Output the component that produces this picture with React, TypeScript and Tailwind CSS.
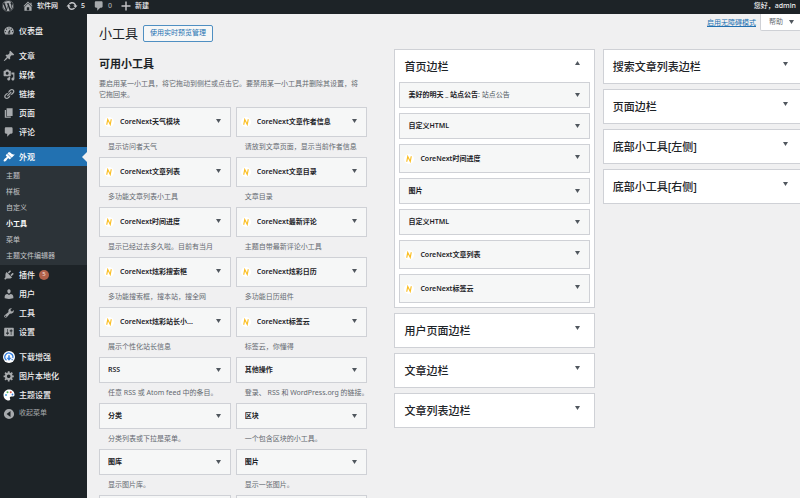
import type { ReactNode } from "react";
import { FaWordpress } from "react-icons/fa";

const icons = {
  dashboard:
    "M3.76 16h12.48c1.1-1.37 1.76-3.11 1.76-5 0-4.42-3.58-8-8-8s-8 3.58-8 8c0 1.89.66 3.63 1.76 5zM10 4c.55 0 1 .45 1 1s-.45 1-1 1-1-.45-1-1 .45-1 1-1zM6 6c.55 0 1 .45 1 1s-.45 1-1 1-1-.45-1-1 .45-1 1-1zm8 0c.55 0 1 .45 1 1s-.45 1-1 1-1-.45-1-1 .45-1 1-1zm-5.37 5.55L12 7v6c0 1.1-.9 2-2 2s-2-.9-2-2c0-.57.24-1.08.63-1.45zM4 10c.55 0 1 .45 1 1s-.45 1-1 1-1-.45-1-1 .45-1 1-1zm12 0c.55 0 1 .45 1 1s-.45 1-1 1-1-.45-1-1 .45-1 1-1zm-5 3c0-.55-.45-1-1-1s-1 .45-1 1 .45 1 1 1 1-.45 1-1z",
  post: "M10.44 3.02l1.82-1.82 6.36 6.35-1.83 1.82c-1.05-.68-2.48-.57-3.41.36l-.75.75c-.92.93-1.04 2.35-.35 3.41l-1.83 1.82-2.41-2.41-2.8 2.79c-.42.42-3.38 2.71-3.8 2.29s1.86-3.39 2.28-3.81l2.79-2.79L4.1 9.36l1.83-1.82c1.05.69 2.48.57 3.4-.36l.75-.75c.93-.92 1.05-2.35.36-3.41z",
  media:
    "M13 11V4c0-.55-.45-1-1-1h-1.67L9 1H5L3.67 3H2c-.55 0-1 .45-1 1v7c0 .55.45 1 1 1h10c.55 0 1-.45 1-1zM7 4.5c1.38 0 2.5 1.12 2.5 2.5S8.38 9.5 7 9.5 4.5 8.38 4.5 7 5.62 4.5 7 4.5zM14 6h5v10.5c0 1.38-1.12 2.5-2.5 2.5S14 17.88 14 16.5s1.12-2.5 2.5-2.5c.17 0 .34.02.5.05V9h-3V6zm-4 8.05V13h2v3.5c0 1.38-1.12 2.5-2.5 2.5S7 17.88 7 16.5 8.12 14 9.5 14c.17 0 .34.02.5.05z",
  links:
    "M17.74 2.76c1.68 1.69 1.68 4.41 0 6.1l-1.53 1.52c-1.12 1.12-2.7 1.47-4.14 1.09l2.62-2.61.76-.77.76-.76c.84-.84.84-2.2 0-3.04-.84-.85-2.2-.85-3.04 0l-.77.76-3.38 3.38c-.37-1.44-.02-3.02 1.1-4.14l1.52-1.53c1.69-1.68 4.42-1.68 6.1 0zM8.59 13.43l5.34-5.34c.42-.42.42-1.1 0-1.52-.44-.43-1.13-.39-1.53 0l-5.33 5.34c-.42.42-.42 1.1 0 1.52.44.43 1.13.39 1.52 0zm-.76 2.29l4.14-4.15c.38 1.44.03 3.02-1.09 4.14l-1.52 1.53c-1.69 1.68-4.41 1.68-6.1 0-1.68-1.68-1.68-4.42 0-6.1l1.53-1.52c1.12-1.12 2.7-1.47 4.14-1.1l-4.14 4.15c-.85.84-.85 2.2 0 3.05.84.84 2.2.84 3.04 0z",
  page: "M6 15V2h10v13H6zm-1 1h8v2H3V5h2v11z",
  comments:
    "M5 2h9c1.1 0 2 .9 2 2v7c0 1.1-.9 2-2 2h-2l-5 5v-5H5c-1.1 0-2-.9-2-2V4c0-1.1.9-2 2-2z",
  appearance:
    "M14.48 11.06L7.41 3.99l1.5-1.5c.5-.56 2.3-.47 3.51.32 1.21.8 1.43 1.28 2.91 2.1 1.18.64 2.45 1.26 4.45.85zm-.71.71L6.7 4.7 4.93 6.47c-.39.39-.39 1.02 0 1.41l1.06 1.06c.39.39.39 1.03 0 1.42-.6.6-1.43 1.11-2.21 1.69-.35.26-.7.53-1.01.84C1.43 14.23.4 16.08 1.4 17.07c.99 1 2.84-.03 4.18-1.36.31-.31.58-.66.85-1.02.57-.78 1.08-1.61 1.69-2.21.39-.39 1.02-.39 1.41 0l1.06 1.06c.39.39 1.02.39 1.41 0z",
  plugins:
    "M13.11 4.36L9.87 7.6 8 5.73l3.24-3.24c.35-.34 1.05-.2 1.56.32.52.51.66 1.21.31 1.55zm-8 1.77l.91-1.12 9.01 9.01-1.19.84c-.71.71-2.63 1.16-3.82 1.16H6.14L4.9 17.26c-.59.59-1.54.59-2.12 0-.59-.58-.59-1.53 0-2.12l1.24-1.24v-3.88c0-1.13.4-3.19 1.09-3.89zm7.26 3.97l3.24-3.24c.34-.35 1.04-.21 1.55.31.52.51.66 1.21.31 1.55l-3.24 3.25z",
  users:
    "M10 9.25c-2.27 0-2.73-3.44-2.73-3.44C7 4.02 7.82 2 9.97 2c2.16 0 2.98 2.02 2.71 3.81 0 0-.41 3.44-2.68 3.44zm0 2.57L12.72 10c2.39 0 4.52 2.33 4.52 4.53v2.49s-3.65 1.13-7.24 1.13c-3.65 0-7.24-1.13-7.24-1.13v-2.49c0-2.25 1.94-4.48 4.47-4.48z",
  tools:
    "M16.68 9.77c-1.34 1.34-3.3 1.67-4.95.99l-5.41 6.52c-.99.99-2.59.99-3.58 0s-.99-2.59 0-3.57l6.52-5.42c-.68-1.65-.35-3.61.99-4.95 1.28-1.28 3.12-1.62 4.72-1.06l-2.89 2.89 2.82 2.82 2.86-2.87c.53 1.58.18 3.39-1.08 4.65zM3.81 16.21c.4.39 1.04.39 1.43 0 .4-.4.4-1.04 0-1.43-.39-.4-1.03-.4-1.43 0-.39.39-.39 1.03 0 1.43z",
  settings:
    "M18 16V4c0-.55-.45-1-1-1H3c-.55 0-1 .45-1 1v12c0 .55.45 1 1 1h14c.55 0 1-.45 1-1zM8 11h1c.55 0 1 .45 1 1s-.45 1-1 1H8v1.5c0 .28-.22.5-.5.5s-.5-.22-.5-.5V13H6c-.55 0-1-.45-1-1s.45-1 1-1h1V5.5c0-.28.22-.5.5-.5s.5.22.5.5V11zm5-2h-1c-.55 0-1-.45-1-1s.45-1 1-1h1V5.5c0-.28.22-.5.5-.5s.5.22.5.5V7h1c.55 0 1 .45 1 1s-.45 1-1 1h-1v5.5c0 .28-.22.5-.5.5s-.5-.22-.5-.5V9z",
  gear: "M18 12h-2.18c-.17.7-.44 1.35-.81 1.93l1.54 1.54-2.1 2.1-1.54-1.54c-.58.36-1.23.63-1.91.79V19H8v-2.18c-.68-.16-1.33-.43-1.91-.79l-1.54 1.54-2.12-2.12 1.54-1.54c-.36-.58-.63-1.23-.79-1.91H1V9.03h2.17c.16-.7.44-1.35.8-1.94L2.43 5.55l2.1-2.1 1.54 1.54c.58-.37 1.24-.64 1.93-.81V2h3v2.18c.68.16 1.33.43 1.91.79l1.54-1.54 2.12 2.12-1.54 1.54c.36.59.64 1.24.8 1.94H18V12zm-8.5 1.5c1.66 0 3-1.34 3-3s-1.34-3-3-3-3 1.34-3 3 1.34 3 3 3z",
  home: "M16 8.5l1.53 1.53-1.06 1.06L10 4.6l-6.47 6.49-1.06-1.06L10 2.5l4 4v-2h2v4zm-6-2.46l6 5.99V18H4v-5.97zM12 17v-5H8v5h4z",
  update:
    "M10.2 3.28c3.53 0 6.43 2.61 6.92 6h2.08l-3.5 4-3.5-4h2.32c-.45-1.97-2.21-3.45-4.32-3.45-1.45 0-2.73.71-3.54 1.78L4.95 5.66C6.23 4.2 8.11 3.28 10.2 3.28zm-.4 13.44c-3.52 0-6.43-2.61-6.92-6H.8l3.5-4c1.17 1.33 2.33 2.67 3.5 4H5.48c.45 1.97 2.21 3.45 4.32 3.45 1.45 0 2.73-.71 3.54-1.78l1.71 1.95c-1.28 1.46-3.15 2.38-5.25 2.38z",
  plus: "M17.5 8.8v2.4h-6.3v6.3H8.8v-6.3H2.5V8.8h6.3V2.5h2.4v6.3z",
  collapse:
    "M10 1.5a8.5 8.5 0 1 0 0 17a8.5 8.5 0 1 0 0-17zM12.5 5v10L6 10z",
};

type IconName = keyof typeof icons;

function Icon({ name }: { name: IconName }) {
  return (
    <svg viewBox="0 0 20 20" className="size-3 shrink-0" fill="currentColor" fillRule="evenodd" aria-hidden="true">
      <path d={icons[name]} />
    </svg>
  );
}

function DownloadIcon() {
  return (
    <svg viewBox="0 0 24 24" className="size-3 shrink-0" aria-hidden="true">
      <circle cx="12" cy="12" r="12" fill="#fff" />
      <path d="M7 18.5A8 8 0 1 1 19.5 14" fill="none" stroke="#2f7de0" strokeWidth="2.5" />
      <path d="M10.5 8.500h3v5h3.500l-5 6-5-6h3.500z" fill="#2f7de0" />
      <path d="M16.500 15.500l3.500 1-2 3z" fill="#2f7de0" />
    </svg>
  );
}

function PaletteIcon() {
  return (
    <svg viewBox="0 0 24 24" className="size-3 shrink-0" aria-hidden="true">
      <path d="M12 1C5.500 1 1 6 1 12s4.500 11 10.500 11c3 0 3.500-2 2.500-4-1-2.500 0-4 3-4h3c2 0 3-1.500 3-4C23 5 18 1 12 1z" fill="#fff" />
      <circle cx="6" cy="12" r="2" fill="#4aa3df" />
      <circle cx="9" cy="6.500" r="2" fill="#5bb85b" />
      <circle cx="15.500" cy="6.500" r="2" fill="#e05a4b" />
      <circle cx="19" cy="11" r="1.800" fill="#3b7ddd" />
    </svg>
  );
}

type MenuEntry = { label: string; icon: ReactNode; badge?: string; active?: boolean };

const menuTop: MenuEntry[] = [
  { label: "文章", icon: <Icon name="post" /> },
  { label: "媒体", icon: <Icon name="media" /> },
  { label: "链接", icon: <Icon name="links" /> },
  { label: "页面", icon: <Icon name="page" /> },
  { label: "评论", icon: <Icon name="comments" /> },
];

const submenu = ["主题", "样板", "自定义", "小工具", "菜单", "主题文件编辑器"];

const menuAdmin: MenuEntry[] = [
  { label: "插件", icon: <Icon name="plugins" />, badge: "5" },
  { label: "用户", icon: <Icon name="users" /> },
  { label: "工具", icon: <Icon name="tools" /> },
  { label: "设置", icon: <Icon name="settings" /> },
];

const menuExtra: MenuEntry[] = [
  { label: "下载增强", icon: <DownloadIcon /> },
  { label: "图片本地化", icon: <Icon name="gear" /> },
  { label: "主题设置", icon: <PaletteIcon /> },
];

function MenuItem({ label, icon, badge, active }: MenuEntry) {
  return (
    <li>
      <a
        href="#"
        className={
          active
            ? "relative flex h-[19px] items-center gap-1 bg-[#2271b1] pl-[3px] text-[8px] font-medium text-white"
            : "flex h-[19px] items-center gap-1 pl-[3px] text-[8px] font-medium text-[#f0f0f1]"
        }
      >
        <span className={active ? "text-white" : "text-[#a7aaad]"}>{icon}</span>
        {label}
        {badge && (
          <span className="flex size-[10px] items-center justify-center rounded-full bg-[#b0614a] text-[6px] text-[#f0d8d0]">
            {badge}
          </span>
        )}
        {active && (
          <span className="absolute top-1/2 right-0 size-0 -translate-y-1/2 border-y-5 border-r-5 border-y-transparent border-r-[#f0f0f1]" />
        )}
      </a>
    </li>
  );
}

function Sidebar() {
  return (
    <nav aria-label="主菜单" className="w-[87px] shrink-0 bg-[#1d2327] pt-[7px]">
      <ul className="flex flex-col gap-[6px]">
        <MenuItem label="仪表盘" icon={<Icon name="dashboard" />} />
        <li>
          <ul>
            {menuTop.map((m) => (
              <MenuItem key={m.label} {...m} />
            ))}
          </ul>
        </li>
        <li>
          <ul>
            <MenuItem label="外观" icon={<Icon name="appearance" />} active />
            <li>
              <ul className="bg-[#2c3338] pt-[2px] pb-px">
                {submenu.map((s) => (
                  <li key={s}>
                    <a
                      href="#"
                      className={
                        s === "小工具"
                          ? "block pl-[6px] text-[7px] leading-4 font-bold text-white"
                          : "block pl-[6px] text-[7px] leading-4 text-[#c3c4c7]"
                      }
                    >
                      {s}
                    </a>
                  </li>
                ))}
              </ul>
            </li>
            {menuAdmin.map((m) => (
              <MenuItem key={m.label} {...m} />
            ))}
          </ul>
        </li>
        <li>
          <ul>
            {menuExtra.map((m) => (
              <MenuItem key={m.label} {...m} />
            ))}
            <li>
              <button type="button" className="flex h-[19px] items-center gap-1 pl-[3px] text-[7px] text-[#a7aaad]">
                <Icon name="collapse" />
                收起菜单
              </button>
            </li>
          </ul>
        </li>
      </ul>
    </nav>
  );
}

function TopBar() {
  return (
    <header className="flex h-[14px] items-center bg-[#1d2327] pr-1 pb-[2px] pl-[2px] text-[7px] font-medium text-[#f0f0f1]">
      <a href="#" aria-label="关于WordPress" className="mr-2 text-[#a7aaad]">
        <FaWordpress className="size-3" />
      </a>
      <a href="#" className="mr-2 flex items-center gap-[3px]">
        <span className="text-[#a7aaad]"><Icon name="home" /></span>
        软件网
      </a>
      <a href="#" className="mr-2 flex items-center gap-[3px]">
        <span className="text-[#c3c4c7]"><Icon name="update" /></span>
        5
      </a>
      <a href="#" className="mr-2 flex items-center gap-[3px] text-[#a7aaad]">
        <Icon name="comments" />
        0
      </a>
      <a href="#" className="flex items-center gap-[3px]">
        <span className="text-[#c3c4c7]"><Icon name="plus" /></span>
        新建
      </a>
      <a href="#" className="ml-auto">您好，admin</a>
    </header>
  );
}

function Arrow({ up }: { up?: boolean }) {
  return (
    <svg viewBox="0 0 5 4" className="h-1 w-[5px] shrink-0" fill="#50575e" aria-hidden="true">
      <path d={up ? "M0 4h5L2.500 0z" : "M0 0h5L2.500 4z"} />
    </svg>
  );
}

function BrandMark() {
  return (
    <svg viewBox="0 0 20 20" className="size-[10px] shrink-0" aria-hidden="true">
      <circle cx="10" cy="10" r="10" fill="#fff" />
      <path d="M5.500 15.500L7.500 5l5 10L14.500 4.500" fill="none" stroke="#fbbf24" strokeWidth="2.400" />
    </svg>
  );
}

type Widget = { title: string; note?: string; desc?: string; branded?: boolean };

function WidgetCard({ title, note, branded, placed }: Widget & { placed?: boolean }) {
  const height = branded ? (placed ? "h-[29px]" : "h-[30px]") : "h-[26px]";
  const inset = branded ? "gap-[6px] pl-1" : "pl-2";
  return (
    <button
      type="button"
      className={`flex w-full items-center border border-[#cfd1d6] bg-[#f6f7f7] pr-[9px] text-left text-[7px] font-semibold text-[#1d2327] ${height} ${inset}`}
    >
      {branded && <BrandMark />}
      <span className="min-w-0 flex-1 truncate leading-[10px]">
        {title}
        {note && <span className="font-normal text-[#50575e]">: {note}</span>}
      </span>
      <span className={branded ? "pb-[3px]" : ""}>
        <Arrow />
      </span>
    </button>
  );
}

const available: Widget[] = [
  { title: "CoreNext天气模块", desc: "显示访问者天气", branded: true },
  { title: "CoreNext文章作者信息", desc: "请放到文章页面，显示当前作者信息", branded: true },
  { title: "CoreNext文章列表", desc: "多功能文章列表小工具", branded: true },
  { title: "CoreNext文章目录", desc: "文章目录", branded: true },
  { title: "CoreNext时间进度", desc: "显示已经过去多久啦。目前有当月", branded: true },
  { title: "CoreNext最新评论", desc: "主题自带最新评论小工具", branded: true },
  { title: "CoreNext炫彩搜索框", desc: "多功能搜索框，搜本站，搜全网", branded: true },
  { title: "CoreNext炫彩日历", desc: "多功能日历组件", branded: true },
  { title: "CoreNext炫彩站长小...", desc: "展示个性化站长信息", branded: true },
  { title: "CoreNext标签云", desc: "标签云，你懂得", branded: true },
  { title: "RSS", desc: "任意 RSS 或 Atom feed 中的条目。" },
  { title: "其他操作", desc: "登录、 RSS 和 WordPress.org 的链接。" },
  { title: "分类", desc: "分类列表或下拉是菜单。" },
  { title: "区块", desc: "一个包含区块的小工具。" },
  { title: "图库", desc: "显示图片库。" },
  { title: "图片", desc: "显示一张图片。" },
];

const homeWidgets: Widget[] = [
  { title: "美好的明天 _ 站点公告", note: "站点公告" },
  { title: "自定义HTML" },
  { title: "CoreNext时间进度", branded: true },
  { title: "图片" },
  { title: "自定义HTML" },
  { title: "CoreNext文章列表", branded: true },
  { title: "CoreNext标签云", branded: true },
];

function Area({ title, widgets }: { title: string; widgets?: Widget[] }) {
  return (
    <section className="border border-[#cfd1d6] bg-white">
      <h2>
        <button
          type="button"
          className={
            widgets
              ? "flex h-8 w-full items-center justify-between pt-[2px] pr-[14px] pl-[9px] text-[11px] font-medium text-[#1d2327]"
              : "flex h-[33px] w-full items-center justify-between pt-[2px] pr-[14px] pl-[9px] text-[11px] font-medium text-[#1d2327]"
          }
        >
          {title}
          <span className="flex pb-2">
            <Arrow up={!!widgets} />
          </span>
        </button>
      </h2>
      {widgets && (
        <div className="flex flex-col gap-[5px] px-1 pb-1">
          {widgets.map((w, i) => (
            <WidgetCard key={i} {...w} placed />
          ))}
        </div>
      )}
    </section>
  );
}

export default function App() {
  return (
    <div className="flex h-screen flex-col overflow-hidden bg-[#f0f0f1] font-['Noto_Sans','Noto_Sans_CJK_SC',sans-serif] text-[7px] text-[#1d2327]">
      <TopBar />
      <div className="flex min-h-0 flex-1">
        <Sidebar />
        <main className="min-w-0 flex-1 overflow-hidden pl-3">
          <div className="flex h-[29px] items-start">
            <div className="flex items-center gap-[5px] pt-[11px]">
              <h1 className="text-[13px] leading-[17px]">小工具</h1>
              <button type="button" className="h-[17px] rounded-[2px] border border-[#4f8fc2] bg-[#f6f7f7] px-[6px] text-[7px] text-[#2271b1]">
                使用实时预览管理
              </button>
            </div>
            <a href="#" className="mr-1 ml-auto leading-[17px] text-[#2271b1] underline">
              启用无障碍模式
            </a>
            <button type="button" className="-mr-px flex h-[17px] items-center gap-[6px] rounded-b-[2px] border border-t-0 border-[#cfd1d6] bg-white pr-[6px] pl-2 text-[#646970]">
              帮助
              <Arrow />
            </button>
          </div>
          <div className="-mr-[3px] flex pt-[6px]">
            <section className="min-w-0 flex-[268] pt-[7px]">
              <h2 className="text-[11px] leading-4 font-semibold">可用小工具</h2>
              <p className="mt-[6px] mb-[7px] pr-1 leading-[11px] text-[#646970]">
                要启用某一小工具，将它拖动到侧栏或点击它。要禁用某一小工具并删除其设置，将它拖回来。
              </p>
              <div className="grid grid-cols-2 gap-x-[5px]">
                {available.map((w) => (
                  <div key={w.title} className="min-w-0">
                    <WidgetCard {...w} />
                    <p className="pl-[9px] leading-5 whitespace-nowrap text-[#646970]">{w.desc}</p>
                  </div>
                ))}
                <div className="h-[26px] border border-[#cfd1d6] bg-[#f6f7f7]" />
                <div className="h-[26px] border border-[#cfd1d6] bg-[#f6f7f7]" />
              </div>
            </section>
            <div className="ml-[27px] flex min-w-0 flex-[200] flex-col gap-[5px]">
              <Area title="首页边栏" widgets={homeWidgets} />
              <Area title="用户页面边栏" />
              <Area title="文章边栏" />
              <Area title="文章列表边栏" />
            </div>
            <div className="ml-2 flex min-w-0 flex-[200] flex-col gap-[5px]">
              <Area title="搜索文章列表边栏" />
              <Area title="页面边栏" />
              <Area title="底部小工具[左侧]" />
              <Area title="底部小工具[右侧]" />
            </div>
          </div>
        </main>
      </div>
    </div>
  );
}
